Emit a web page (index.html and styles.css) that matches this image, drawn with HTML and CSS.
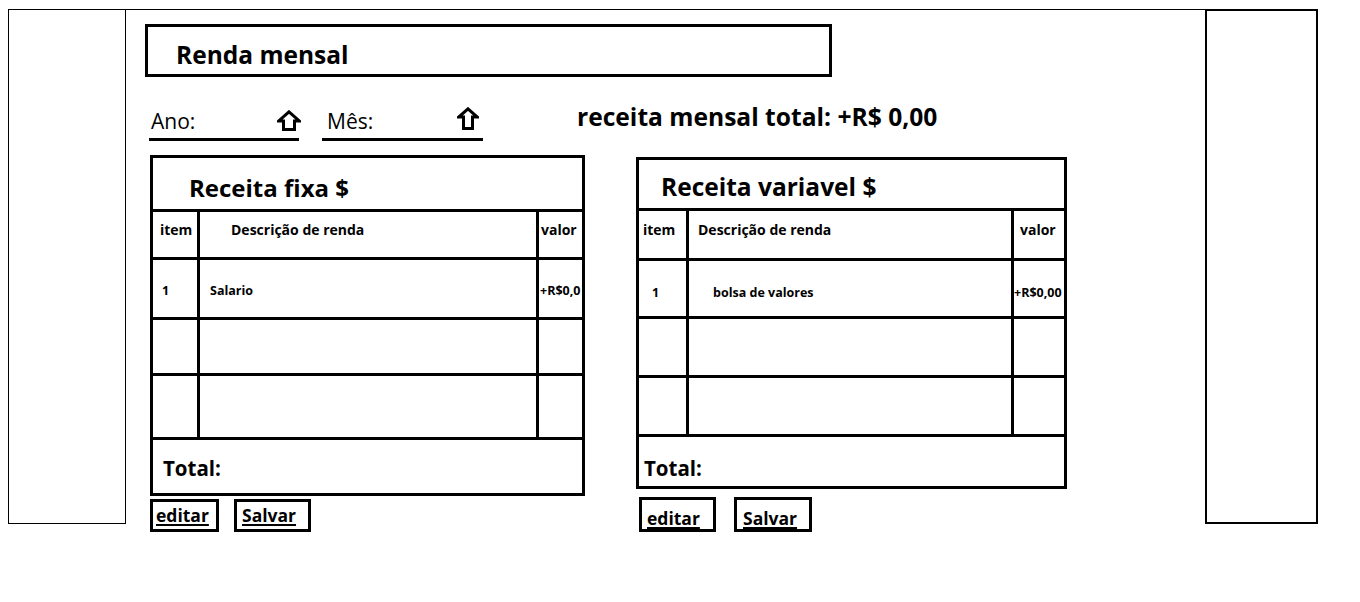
FILE: index.html
```html
<!DOCTYPE html>
<html lang="pt-BR">
<head>
    <meta charset="UTF-8">
    <meta name="viewport" content="width=device-width, initial-scale=1.0">
    <title>Renda mensal</title>
    <link rel="stylesheet" href="styles.css">
</head>
<body>
    <div class="frame">
        <aside class="side side-left"></aside>

        <main class="main">
            <header class="title-box">
                <h1 class="title">Renda mensal</h1>
            </header>

            <!-- Ano / Mês + total do mês -->
            <div class="filters">
                <label class="field field-ano">
                    <span class="field-label">Ano:</span>
                    <svg class="arrow" width="24" height="21" viewBox="0 0 24 21">
                        <polygon points="12,1.8 22.3,11 17.5,11 17.5,19.5 6.5,19.5 6.5,11 1.7,11" fill="none" stroke="#000" stroke-width="3" stroke-linejoin="miter"/>
                    </svg>
                </label>
                <label class="field field-mes">
                    <span class="field-label">Mês:</span>
                    <svg class="arrow" width="22" height="23" viewBox="0 0 22 23">
                        <polygon points="11,1.8 20.3,10 15.5,10 15.5,21.5 6.5,21.5 6.5,10 1.7,10" fill="none" stroke="#000" stroke-width="3" stroke-linejoin="miter"/>
                    </svg>
                </label>
                <p class="month-total">receita mensal total: +R$ 0,00</p>
            </div>

            <div class="cards">
                <section class="card-col">
                    <div class="card card-fixa">
                        <h2 class="card-title">Receita fixa $</h2>
                        <div class="cell head c-item">item</div>
                        <div class="cell head c-desc">Descrição de renda</div>
                        <div class="cell head c-val">valor</div>
                        <div class="cell row c-item">1</div>
                        <div class="cell row c-desc">Salario</div>
                        <div class="cell row c-val">+R$0,0</div>
                        <div class="cell"></div>
                        <div class="cell"></div>
                        <div class="cell"></div>
                        <div class="cell"></div>
                        <div class="cell"></div>
                        <div class="cell"></div>
                        <div class="cell card-total">Total:</div>
                    </div>
                    <div class="actions">
                        <button class="btn btn-edit">editar</button>
                        <button class="btn btn-save">Salvar</button>
                    </div>
                </section>

                <section class="card-col card-col-variavel">
                    <div class="card card-variavel">
                        <h2 class="card-title">Receita variavel $</h2>
                        <div class="cell head c-item">item</div>
                        <div class="cell head c-desc">Descrição de renda</div>
                        <div class="cell head c-val">valor</div>
                        <div class="cell row c-item">1</div>
                        <div class="cell row c-desc">bolsa de valores</div>
                        <div class="cell row c-val">+R$0,00</div>
                        <div class="cell"></div>
                        <div class="cell"></div>
                        <div class="cell"></div>
                        <div class="cell"></div>
                        <div class="cell"></div>
                        <div class="cell"></div>
                        <div class="cell card-total">Total:</div>
                    </div>
                    <div class="actions">
                        <button class="btn btn-edit">editar</button>
                        <button class="btn btn-save">Salvar</button>
                    </div>
                </section>
            </div>
        </main>

        <aside class="side side-right"></aside>
    </div>
</body>
</html>
```

FILE: styles.css
```css
body {
    margin: 0;
    font-family: "Open Sans", Lato, sans-serif;
    font-variant-ligatures: none;
    color: #000;
    background: #fff;
}

/* Outer wireframe: two side columns + main area */
.frame {
    display: flex;
    align-items: flex-start;
    width: 1310px;
    margin: 9px 0 0 8px;
}

.side {
    height: 515px;
    box-sizing: border-box;
}

.side-left {
    width: 118px;
    border: 1px solid #000;
}

.side-right {
    width: 113px;
    border: 2px solid #000;
}

.main {
    width: 1079px;
    box-sizing: border-box;
    border-top: 1px solid #000;
    padding-top: 14px;
}

/* Title */
.title-box {
    width: 687px;
    height: 53px;
    margin-left: 19px;
    box-sizing: border-box;
    border: 3px solid #000;
    padding: 16px 0 0 28px;
}

.title {
    margin: 0;
    font-size: 24.5px;
    font-weight: 700;
    line-height: 1;
}

/* Filters row */
.filters {
    display: flex;
    align-items: flex-end;
    height: 35px;
    margin: 29px 0 0 23px;
}

.field {
    display: flex;
    align-items: flex-end;
    justify-content: space-between;
    height: 35px;
    box-sizing: border-box;
    border-bottom: 3px solid #000;
}

.field-ano {
    width: 150px;
    padding-left: 2px;
}

.field-mes {
    width: 161px;
    margin-left: 23px;
    padding-left: 5px;
}

.field-label {
    font-size: 21px;
    line-height: 1;
    padding-bottom: 6px;
}

.arrow {
    display: block;
}

.field-ano .arrow {
    margin: 0 -2px 7px 0;
}

.field-mes .arrow {
    margin: 0 4px 8px 0;
}

.month-total {
    margin: 0 0 11px 94px;
    font-size: 24.6px;
    font-weight: 700;
    line-height: 1;
}

/* Cards */
.cards {
    display: flex;
    align-items: flex-start;
    gap: 51px;
    margin: 14px 0 0 24px;
}

.card-col-variavel {
    margin-top: 2px;
}

.card {
    display: grid;
    gap: 3px;
    padding: 3px;
    background: #000;
    font-weight: 700;
}

.card-fixa {
    width: 435px;
    grid-template-columns: 44px 336px 43px;
    grid-template-rows: 51px 45px 57px 53px 61px 53px;
}

.card-variavel {
    width: 431px;
    grid-template-columns: 47px 322px 50px;
    grid-template-rows: 48px 47px 55px 56px 56px 49px;
}

.card, .card * {
    box-sizing: border-box;
}

.card-title,
.cell {
    margin: 0;
    background: #fff;
    line-height: 1;
    white-space: nowrap;
    overflow: hidden;
}

.card-title {
    grid-column: 1 / -1;
    font-weight: 700;
}

.card-fixa .card-title {
    font-size: 24px;
    padding: 18px 0 0 36px;
}

.card-variavel .card-title {
    font-size: 24.5px;
    padding: 15px 0 0 22px;
}

.head {
    font-size: 14px;
}

.row {
    font-size: 12.5px;
}

.card-fixa .head { padding-top: 11px; }
.card-fixa .row { padding-top: 25px; }
.card-fixa .head.c-item { padding-left: 7px; }
.card-fixa .head.c-desc { padding-left: 31px; }
.card-fixa .head.c-val { padding-left: 2px; }
.card-fixa .row.c-item { padding-left: 9px; }
.card-fixa .row.c-desc { padding-left: 10px; }
.card-fixa .row.c-val { padding-left: 1px; }

.card-variavel .head { padding-top: 12px; }
.card-variavel .row { padding-top: 26px; }
.card-variavel .head.c-item { padding-left: 4px; }
.card-variavel .head.c-desc { padding-left: 9px; }
.card-variavel .head.c-val { padding-left: 6px; }
.card-variavel .row.c-item { padding-left: 13px; }
.card-variavel .row.c-desc { padding-left: 24px; }
.card-variavel .row.c-val { padding-left: 0; }

.card-total {
    grid-column: 1 / -1;
    font-size: 20.5px;
}

.card-fixa .card-total {
    padding: 18px 0 0 10px;
}

.card-variavel .card-total {
    padding: 21px 0 0 5px;
}

/* Buttons */
.actions {
    display: flex;
}

.btn {
    box-sizing: border-box;
    margin: 0;
    border: 3px solid #000;
    background: #fff;
    color: #000;
    font-family: inherit;
    font-size: 17.5px;
    font-weight: 700;
    line-height: 18px;
    text-align: left;
    text-decoration: underline;
    text-decoration-thickness: 2px;
    text-underline-offset: 2px;
    cursor: pointer;
}

.card-fixa + .actions {
    gap: 15px;
    margin-top: 3px;
}

.card-fixa + .actions .btn {
    padding: 4px 0 5px 3px;
}

.card-fixa + .actions .btn-edit { width: 69px; }
.card-fixa + .actions .btn-save { width: 77px; padding-left: 5px; }

.card-variavel + .actions {
    gap: 18px;
    margin: 8px 0 0 3px;
}

.card-variavel + .actions .btn {
    padding: 9px 0 2px 5px;
}

.card-variavel + .actions .btn-edit { width: 77px; }
.card-variavel + .actions .btn-save { width: 78px; padding-left: 6px; }
```
